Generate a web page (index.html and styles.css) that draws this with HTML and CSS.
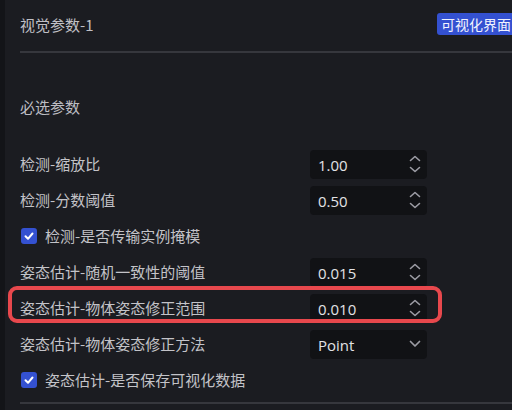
FILE: index.html
```html
<!DOCTYPE html>
<html lang="zh">
<head>
<meta charset="utf-8">
<link rel="stylesheet" href="styles.css">
</head>
<body>
<div class="rail"></div>
<div class="main">
  <div class="header">
    <span class="title">视觉参数-1</span>
    <span class="badge">可视化界面</span>
  </div>
  <div class="divider"></div>
  <div class="section-label">必选参数</div>
  <div class="rows">
    <div class="row">
      <span class="label">检测-缩放比</span>
      <div class="field"><span class="value">1.00</span>
        <svg class="spin" width="12" height="20" viewBox="0 0 12 20"><path d="M1.5 6.5 6 2.5 10.5 6.5M1.5 13.5 6 17.5 10.5 13.5" fill="none" stroke="#9c9ca4" stroke-width="1.6" stroke-linecap="round" stroke-linejoin="round"/></svg>
      </div>
    </div>
    <div class="row">
      <span class="label">检测-分数阈值</span>
      <div class="field"><span class="value">0.50</span>
        <svg class="spin" width="12" height="20" viewBox="0 0 12 20"><path d="M1.5 6.5 6 2.5 10.5 6.5M1.5 13.5 6 17.5 10.5 13.5" fill="none" stroke="#9c9ca4" stroke-width="1.6" stroke-linecap="round" stroke-linejoin="round"/></svg>
      </div>
    </div>
    <div class="row">
      <label class="check"><span class="box"><svg width="16" height="16" viewBox="0 0 16 16"><path d="M4.5 8.3 7 10.8 11.5 5.5" fill="none" stroke="#fff" stroke-width="2" stroke-linecap="round" stroke-linejoin="round"/></svg></span><span class="label">检测-是否传输实例掩模</span></label>
    </div>
    <div class="row">
      <span class="label">姿态估计-随机一致性的阈值</span>
      <div class="field"><span class="value">0.015</span>
        <svg class="spin" width="12" height="20" viewBox="0 0 12 20"><path d="M1.5 6.5 6 2.5 10.5 6.5M1.5 13.5 6 17.5 10.5 13.5" fill="none" stroke="#9c9ca4" stroke-width="1.6" stroke-linecap="round" stroke-linejoin="round"/></svg>
      </div>
    </div>
    <div class="row highlight">
      <span class="label">姿态估计-物体姿态修正范围</span>
      <div class="field"><span class="value">0.010</span>
        <svg class="spin" width="12" height="20" viewBox="0 0 12 20"><path d="M1.5 6.5 6 2.5 10.5 6.5M1.5 13.5 6 17.5 10.5 13.5" fill="none" stroke="#9c9ca4" stroke-width="1.6" stroke-linecap="round" stroke-linejoin="round"/></svg>
      </div>
    </div>
    <div class="row">
      <span class="label">姿态估计-物体姿态修正方法</span>
      <div class="field"><span class="value">Point</span>
        <svg class="spin" width="12" height="20" viewBox="0 0 12 20"><path d="M1.5 7.5 6 12 10.5 7.5" fill="none" stroke="#9c9ca4" stroke-width="1.7" stroke-linecap="round" stroke-linejoin="round"/></svg>
      </div>
    </div>
    <div class="row">
      <label class="check"><span class="box"><svg width="16" height="16" viewBox="0 0 16 16"><path d="M4.5 8.3 7 10.8 11.5 5.5" fill="none" stroke="#fff" stroke-width="2" stroke-linecap="round" stroke-linejoin="round"/></svg></span><span class="label">姿态估计-是否保存可视化数据</span></label>
    </div>
  </div>
  <div class="divider bottom"></div>
</div>
</body>
</html>
```
FILE: styles.css
```css
html, body {
  margin: 0;
  padding: 0;
  height: 100%;
}
body {
  background: #1b1c21;
  display: flex;
  overflow: hidden;
  font-family: "Noto Sans CJK SC", "Noto Sans", sans-serif;
  color: #c3c3c8;
  font-size: 15px;
}
.rail {
  width: 5px;
  background: #131418;
  flex-shrink: 0;
}
.main {
  flex: 1;
  padding-left: 15px;
  display: flex;
  flex-direction: column;
}
.header {
  height: 51px;
  display: flex;
  align-items: center;
  justify-content: space-between;
}
.title {
  line-height: 20px;
  margin-top: -2px;
  color: #c0c0c6;
}
.badge {
  background: #3451d1;
  color: #f2f4ff;
  font-size: 14px;
  line-height: 22px;
  padding: 0 4px;
  border-radius: 3px;
  margin-right: -3px;
  margin-top: -3px;
  white-space: nowrap;
}
.divider {
  height: 2px;
  background: #36373d;
}
.section-label {
  margin-top: 44px;
  line-height: 20px;
  color: #bdbdc3;
}
.rows {
  margin-top: 29px;
  display: flex;
  flex-direction: column;
}
.row {
  height: 36px;
  display: flex;
  align-items: center;
  position: relative;
}
.row .label {
  width: 290px;
  line-height: 20px;
}
.check .label {
  width: auto;
}
.field {
  width: 117px;
  height: 29px;
  background: #111215;
  border-radius: 4px;
  display: flex;
  align-items: center;
  justify-content: space-between;
  padding: 0 6px 0 8px;
  box-sizing: border-box;
}
.value {
  font-family: "Open Sans", "Noto Sans", sans-serif;
  font-size: 15px;
  color: #e2e2e6;
  padding-top: 2px;
}
.check {
  display: flex;
  align-items: center;
  gap: 8px;
  padding-left: 1px;
}
.box {
  width: 16px;
  height: 16px;
  background: #3451d1;
  border-radius: 3px;
  display: flex;
}
.highlight::after {
  content: "";
  position: absolute;
  left: -12px;
  width: 434px;
  top: -4px;
  bottom: 3px;
  border: 4px solid #e8484d;
  border-radius: 9px;
  box-sizing: border-box;
}
.bottom {
  margin-top: 4px;
}
```
